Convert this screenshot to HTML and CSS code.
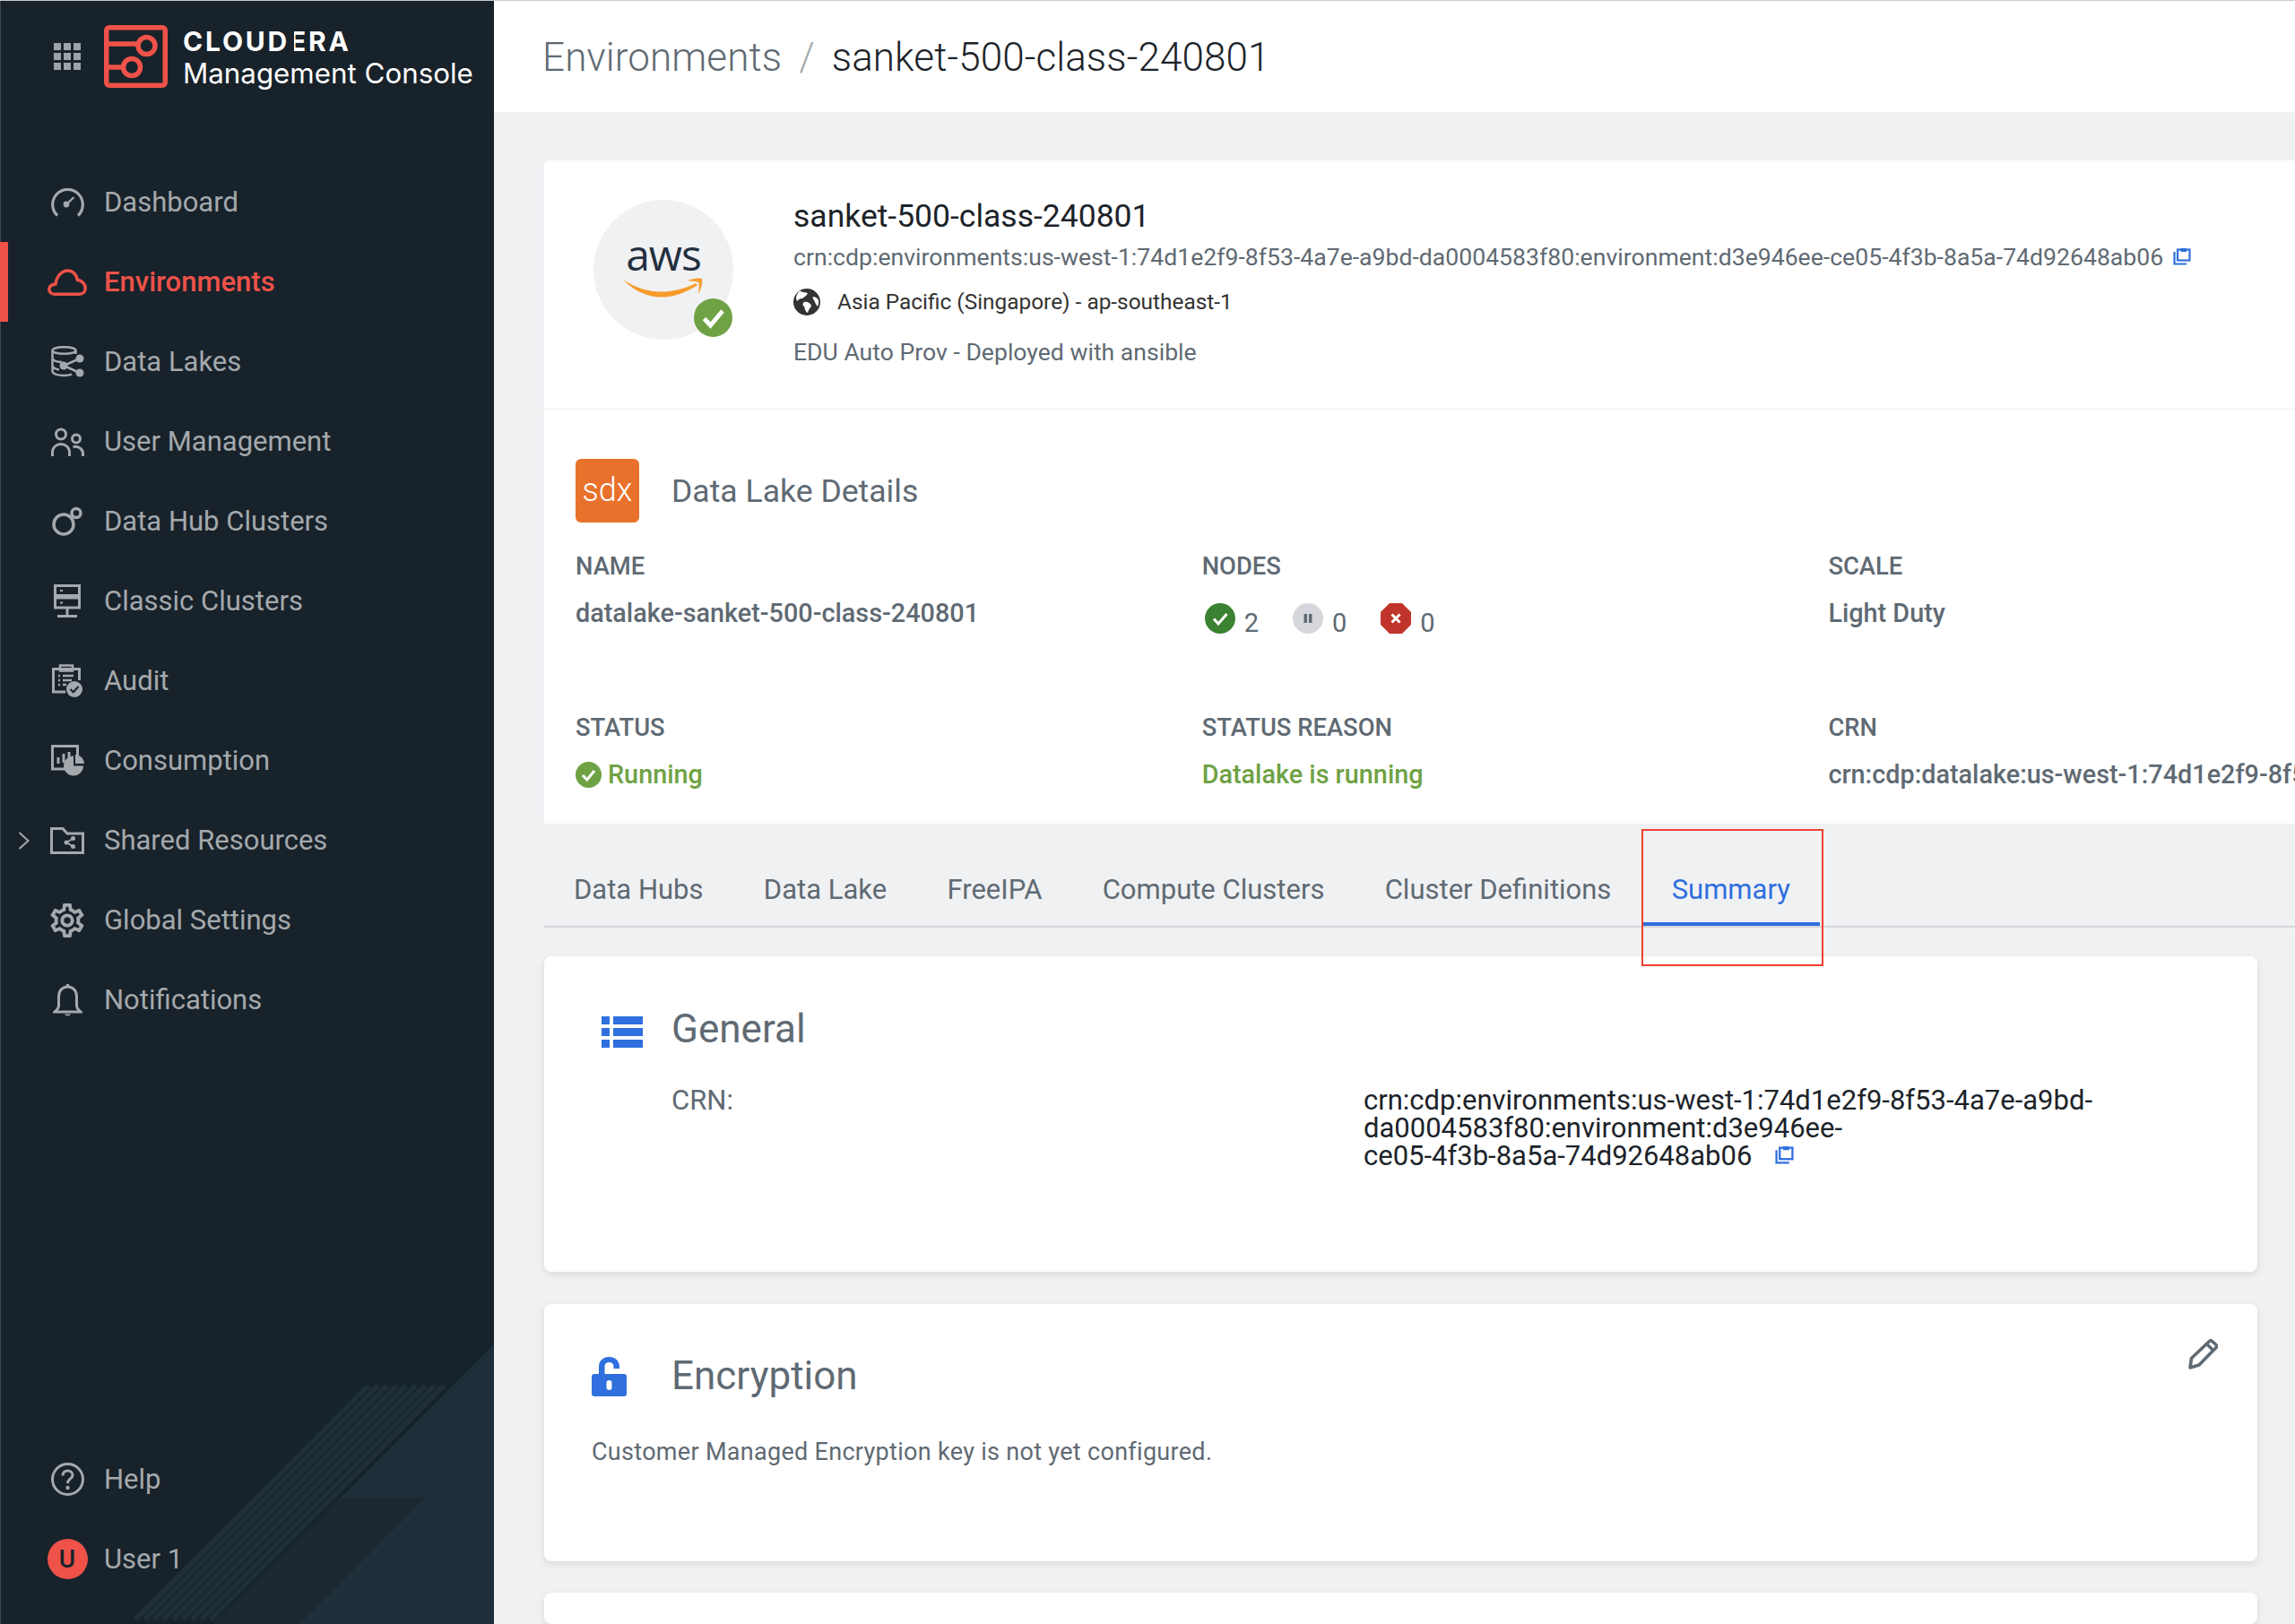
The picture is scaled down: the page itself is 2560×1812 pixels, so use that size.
FILE: index.html
```html
<!DOCTYPE html>
<html>
<head>
    <title>Environments - sanket-500-class-240801</title>
    <link rel="stylesheet" href="styles.css">
</head>
<body>
<div class="app">
    <aside class="sidebar">
        <svg class="sidebar-art" width="551" height="312" viewBox="0 1500 551 312">
            <polygon points="551,1500 380,1671 474,1671 334,1812 551,1812" fill="#1f2f3a"/>
            <polygon points="380,1671 474,1671 334,1812 238,1812" fill="#1b2830"/>
            <g stroke="#1f2f39" stroke-width="6">
                <line x1="411" y1="1546" x2="151" y2="1807"/>
                <line x1="421.5" y1="1546" x2="161.5" y2="1807"/>
                <line x1="432" y1="1546" x2="172" y2="1807"/>
                <line x1="442.5" y1="1546" x2="182.5" y2="1807"/>
                <line x1="453" y1="1546" x2="193" y2="1807"/>
                <line x1="463.5" y1="1546" x2="203.5" y2="1807"/>
                <line x1="474" y1="1546" x2="214" y2="1807"/>
                <line x1="484.5" y1="1546" x2="224.5" y2="1807"/>
                <line x1="495" y1="1546" x2="235" y2="1807"/>
            </g>
        </svg>

        <div class="brand">
            <svg class="brand-apps" width="30" height="30" viewBox="0 0 30 30" fill="#9ea3a8">
                <rect x="0" y="0" width="8" height="8"/><rect x="11" y="0" width="8" height="8"/><rect x="22" y="0" width="8" height="8"/>
                <rect x="0" y="11" width="8" height="8"/><rect x="11" y="11" width="8" height="8"/><rect x="22" y="11" width="8" height="8"/>
                <rect x="0" y="22" width="8" height="8"/><rect x="11" y="22" width="8" height="8"/><rect x="22" y="22" width="8" height="8"/>
            </svg>
            <svg class="brand-logo" width="71" height="70" viewBox="0 0 71 70" fill="none" stroke="#ee5249" stroke-width="5.5">
                <rect x="2.75" y="2.75" width="65.5" height="64.5" rx="3"/>
                <path d="M3 21H38M3 47H22"/>
                <circle cx="47.5" cy="23" r="9.5"/>
                <circle cx="31" cy="47" r="9.5"/>
            </svg>
            <div class="brand-text">
                <div class="brand-name">CLOUD<span class="brand-e">E</span>RA</div>
                <div class="brand-app">Management Console</div>
            </div>
        </div>

        <ul class="nav">
            <li class="nav-item">
                <svg class="nav-icon" width="37" height="32" viewBox="0 0 37 32" fill="none" stroke="#a4a9ad" stroke-width="3.200">
                    <path d="M7 30.500A16.800 16.800 0 1 1 30 30.500"/>
                    <path d="M17 18L25.500 10" stroke-width="2.400"/>
                    <circle cx="17" cy="18" r="3.400" fill="#a4a9ad" stroke="none"/>
                </svg>
                <span>Dashboard</span>
            </li>
            <li class="nav-item active">
                <svg class="nav-icon" width="44" height="30" viewBox="0 0 44 30" fill="none" stroke="#ee5249" stroke-width="3.500">
                    <path d="M8 28.200C3.500 28.200 1.800 25 1.800 23C1.800 19.500 4.500 17.500 9 17C10 8 16 2 22.500 2C28 2 32 6 33.500 12.500C38.500 13 42.200 17 42.200 21.500C42.200 25.500 39.500 28.200 35.500 28.200Z"/>
                </svg>
                <span>Environments</span>
            </li>
            <li class="nav-item">
                <svg class="nav-icon" width="37" height="35" viewBox="0 0 37 35" fill="none" stroke="#a4a9ad" stroke-width="2.500">
                    <ellipse cx="14.500" cy="5" rx="13" ry="3.800"/>
                    <path d="M1.500 5V28C1.500 31 7 33 14 33C18 33 21 32.500 23 31.500M27.500 5V9M1.500 14C3 17 8 18 12 18M1.500 23C3 25 6 26 9 26.500"/>
                    <path d="M32 14L14 22L32 30" stroke-width="2.500"/>
                    <circle cx="32" cy="14" r="4.500" fill="#a4a9ad" stroke="none"/>
                    <circle cx="14" cy="22" r="4.500" fill="#a4a9ad" stroke="none"/>
                    <circle cx="32" cy="30" r="4.500" fill="#a4a9ad" stroke="none"/>
                </svg>
                <span>Data Lakes</span>
            </li>
            <li class="nav-item">
                <svg class="nav-icon" width="37" height="32" viewBox="0 0 37 32" fill="none" stroke="#a4a9ad" stroke-width="3">
                    <circle cx="11" cy="7.500" r="5.500"/>
                    <circle cx="28" cy="12.500" r="4.500"/>
                    <path d="M1.500 32V28C1.500 22 6 18.500 11 18.500C16 18.500 20.500 22 20.500 28V32"/>
                    <path d="M24.500 21.500C30.500 20.500 35.500 24 35.500 29V32"/>
                </svg>
                <span>User Management</span>
            </li>
            <li class="nav-item">
                <svg class="nav-icon" width="34" height="33" viewBox="0 0 34 33" fill="none" stroke="#a4a9ad" stroke-width="3.500">
                    <circle cx="13" cy="20" r="11"/>
                    <circle cx="27" cy="7.500" r="5"/>
                </svg>
                <span>Data Hub Clusters</span>
            </li>
            <li class="nav-item">
                <svg class="nav-icon" width="30" height="37" viewBox="0 0 30 37" fill="none" stroke="#a4a9ad" stroke-width="3">
                    <rect x="1.500" y="1.500" width="27" height="11"/>
                    <rect x="1.500" y="15" width="27" height="11"/>
                    <path d="M15 26V35M4 35.500H26"/>
                    <path d="M7 7H10M7 20.500H10" stroke-width="2"/>
                </svg>
                <span>Classic Clusters</span>
            </li>
            <li class="nav-item">
                <svg class="nav-icon" width="34" height="37" viewBox="0 0 34 37" fill="none" stroke="#a4a9ad" stroke-width="3">
                    <path d="M15 31H1.500V5.500H30.500V18"/>
                    <rect x="9" y="1.500" width="14" height="6" stroke-width="2.500"/>
                    <path d="M7 13H9M12 13H24M7 18H9M12 18H22M7 23H9M12 23H16" stroke-width="2.500"/>
                    <circle cx="25" cy="28" r="9" fill="#a4a9ad" stroke="none"/>
                    <path d="M20.500 28L23.800 31.200L29.500 25" stroke="#18222a" stroke-width="2.200"/>
                </svg>
                <span>Audit</span>
            </li>
            <li class="nav-item">
                <svg class="nav-icon" width="37" height="35" viewBox="0 0 37 35" fill="none" stroke="#a4a9ad" stroke-width="3">
                    <path d="M15 27H1.500V1.500H29.500V14"/>
                    <path d="M8 14V21M14 10V20M20 8V14" stroke-width="3"/>
                    <path d="M25 12.500A11 11 0 1 0 36 23.500H25Z" fill="#a4a9ad" stroke="none"/>
                    <path d="M27 11A10 10 0 0 1 37 21H27Z" fill="#a4a9ad" stroke="none"/>
                </svg>
                <span>Consumption</span>
            </li>
            <li class="nav-item">
                <svg class="nav-caret" width="13" height="20" viewBox="0 0 13 20" fill="none" stroke="#a4a9ad" stroke-width="2">
                    <path d="M1.500 1L11.500 10L1.500 19"/>
                </svg>
                <svg class="nav-icon" width="38" height="30" viewBox="0 0 38 30" fill="none" stroke="#a4a9ad" stroke-width="3">
                    <path d="M1.500 28.500V1.500H14L19 7H36.500V28.500Z"/>
                    <path d="M25 13L18 17L25 21" stroke-width="2"/>
                    <circle cx="25.500" cy="12.500" r="2.500" fill="#a4a9ad" stroke="none"/>
                    <circle cx="18" cy="17" r="2.500" fill="#a4a9ad" stroke="none"/>
                    <circle cx="25.500" cy="21.500" r="2.500" fill="#a4a9ad" stroke="none"/>
                </svg>
                <span>Shared Resources</span>
            </li>
            <li class="nav-item">
                <svg class="nav-icon" width="38" height="38" viewBox="2 2 20 20" fill="#a4a9ad">
                    <path d="M19.430 12.980c.04-.32.07-.64.07-.98 0-.34-.03-.66-.07-.98l2.110-1.650c.19-.15.24-.42.12-.64l-2-3.460c-.09-.16-.26-.25-.44-.25-.06 0-.12.01-.17.03l-2.490 1c-.52-.4-1.080-.73-1.690-.98l-.38-2.650C14.460 2.180 14.250 2 14 2h-4c-.25 0-.46.18-.49.42l-.38 2.650c-.61.25-1.170.59-1.690.98l-2.490-1c-.06-.02-.12-.03-.18-.03-.17 0-.34.09-.43.25l-2 3.460c-.13.22-.07.49.12.64l2.110 1.650c-.04.32-.07.65-.07.98 0 .33.03.66.07.98l-2.110 1.650c-.19.15-.24.42-.12.64l2 3.460c.09.16.26.25.44.25.06 0 .12-.01.17-.03l2.490-1c.52.4 1.080.73 1.690.98l.38 2.650c.03.24.24.42.49.42h4c.25 0 .46-.18.49-.42l.38-2.650c.61-.25 1.170-.59 1.690-.98l2.490 1c.06.02.12.03.18.03.17 0 .34-.09.43-.25l2-3.460c.12-.22.07-.49-.12-.64l-2.110-1.650zm-1.980-1.710c.04.31.05.52.05.73 0 .21-.02.43-.05.73l-.14 1.130.89.7 1.080.84-.7 1.210-1.270-.51-1.040-.42-.9.68c-.43.32-.84.56-1.250.73l-1.060.43-.16 1.130-.2 1.350h-1.400l-.19-1.350-.16-1.130-1.060-.43c-.43-.18-.83-.41-1.230-.71l-.91-.7-1.060.43-1.270.51-.7-1.210 1.080-.84.89-.7-.14-1.130c-.03-.31-.05-.54-.05-.74s.02-.43.05-.73l.14-1.130-.89-.7-1.080-.84.7-1.210 1.270.51 1.040.42.9-.68c.43-.32.84-.56 1.250-.73l1.060-.43.16-1.130.2-1.350h1.390l.19 1.350.16 1.130 1.060.43c.43.18.83.41 1.230.71l.91.7 1.060-.43 1.270-.51.7 1.210-1.070.85-.89.7.14 1.130zM12 8c-2.210 0-4 1.790-4 4s1.790 4 4 4 4-1.790 4-4-1.790-4-4-4zm0 6c-1.100 0-2-.9-2-2s.9-2 2-2 2 .9 2 2-.9 2-2 2z"/>
                </svg>
                <span>Global Settings</span>
            </li>
            <li class="nav-item">
                <svg class="nav-icon" width="33" height="37" viewBox="0 0 33 37" fill="none" stroke="#a4a9ad" stroke-width="3">
                    <path d="M16.500 4C10 4 6.500 9 6.500 15V25C6.500 28 4.500 30 2 32H31C28.500 30 26.500 28 26.500 25V15C26.500 9 23 4 16.500 4Z"/>
                    <path d="M16.500 1V4"/>
                    <path d="M13 34.500C14 37 19 37 20 34.500Z" fill="#a4a9ad" stroke="none"/>
                </svg>
                <span>Notifications</span>
            </li>
        </ul>

        <ul class="nav nav-bottom">
            <li class="nav-item">
                <svg class="nav-icon" width="37" height="37" viewBox="0 0 37 37" fill="none" stroke="#a4a9ad" stroke-width="3">
                    <circle cx="18.500" cy="18.500" r="17"/>
                    <path d="M13 14.500C13 11 15.500 9 18.500 9C21.500 9 24 11 24 14C24 18 18.500 18 18.500 23"/>
                    <circle cx="18.500" cy="28" r="2.200" fill="#a4a9ad" stroke="none"/>
                </svg>
                <span>Help</span>
            </li>
            <li class="nav-item">
                <span class="nav-icon avatar">U</span>
                <span>User 1</span>
            </li>
        </ul>
    </aside>

    <div class="page">
        <header class="topbar">
            <span class="crumb">Environments</span>
            <span class="crumb-sep">/</span>
            <span class="crumb-current">sanket-500-class-240801</span>
        </header>

        <main class="content">
            <section class="env-card">
                <div class="env-head">
                    <div class="cloud-logo">
                        <span class="aws-text">aws</span>
                        <svg class="aws-smile" width="90" height="22" viewBox="0 0 90 22" fill="#f79c2c">
                            <path d="M0 2C14 11 28 15.500 43 15.500C56 15.500 69 12 81 6L83 8C71 16 57 21.500 43 21.500C27 21.500 11 14 0 2Z"/>
                            <path d="M72 3C77 1 84 0 88 1C89 5 87 13 84 18C84.500 13 85 8 84.500 5C81 4 76 3.500 72 3Z"/>
                        </svg>
                        <svg class="status-badge" width="43" height="43" viewBox="0 0 43 43">
                            <circle cx="21.500" cy="21.500" r="21.500" fill="#6fa245"/>
                            <path d="M11.500 22.500L18.500 30L32 14" fill="none" stroke="#fff" stroke-width="5"/>
                        </svg>
                    </div>
                    <div class="env-info">
                        <div class="env-title">sanket-500-class-240801</div>
                        <div class="env-crn">
                            <span>crn:cdp:environments:us-west-1:74d1e2f9-8f53-4a7e-a9bd-da0004583f80:environment:d3e946ee-ce05-4f3b-8a5a-74d92648ab06</span>
                            <svg class="copy-icon" width="20" height="20" viewBox="0 0 20 20" fill="none" stroke="#2f6fde" stroke-width="2.200">
                                <path d="M1.500 5V18.500H15"/>
                                <rect x="5" y="2.500" width="13.500" height="12"/>
                                <path d="M8.500 1H15V5H8.500Z" fill="#2f6fde" stroke="none"/>
                            </svg>
                        </div>
                        <div class="env-region">
                            <svg class="globe" width="30" height="30" viewBox="0 0 30 30">
                                <circle cx="15" cy="15" r="15" fill="#333"/>
                                <path d="M7 2.500C10 4 13 4 16 5C15 8 12 9 10 11C7 11 5 12.500 4.500 14C2.500 12 2 8 7 2.500Z" fill="#fff"/>
                                <path d="M12 15C15 14 19 16 20 19C19 22 17 23 16 27C13 26 13 22 12 20C10 19 10 16 12 15Z" fill="#fff"/>
                                <path d="M22 9C24 9 26.500 10 28 13C28.500 16 28 18 27 20C25 18 24 15 23 13C22 12 21 10 22 9Z" fill="#fff"/>
                            </svg>
                            <span>Asia Pacific (Singapore) - ap-southeast-1</span>
                        </div>
                        <div class="env-desc">EDU Auto Prov - Deployed with ansible</div>
                    </div>
                </div>

                <div class="lake">
                    <div class="lake-head">
                        <span class="sdx">sdx</span>
                        <span class="lake-title">Data Lake Details</span>
                    </div>
                    <div class="lake-grid">
                        <div class="field">
                            <div class="field-label">NAME</div>
                            <div class="field-value">datalake-sanket-500-class-240801</div>
                        </div>
                        <div class="field">
                            <div class="field-label">NODES</div>
                            <div class="nodes">
                                <span class="node">
                                    <svg width="34" height="34" viewBox="0 0 34 34">
                                        <circle cx="17" cy="17" r="17" fill="#3b8132"/>
                                        <path d="M10 17.500L15 23L24.500 12" fill="none" stroke="#fff" stroke-width="3"/>
                                    </svg>
                                    2
                                </span>
                                <span class="node">
                                    <svg width="34" height="34" viewBox="0 0 34 34">
                                        <circle cx="17" cy="17" r="17" fill="#d5d7dc"/>
                                        <path d="M12.500 12H16V22H12.500ZM18 12H21.500V22H18Z" fill="#5f6a73"/>
                                    </svg>
                                    0
                                </span>
                                <span class="node">
                                    <svg width="34" height="34" viewBox="0 0 34 34">
                                        <polygon points="10,0 24,0 34,10 34,24 24,34 10,34 0,24 0,10" fill="#c0352b"/>
                                        <path d="M12.500 12.500L21.500 21.500M21.500 12.500L12.500 21.500" stroke="#fff" stroke-width="3"/>
                                    </svg>
                                    0
                                </span>
                            </div>
                        </div>
                        <div class="field">
                            <div class="field-label">SCALE</div>
                            <div class="field-value">Light Duty</div>
                        </div>
                        <div class="field">
                            <div class="field-label">STATUS</div>
                            <div class="field-value good">
                                <svg class="status-ok" width="29" height="29" viewBox="0 0 29 29">
                                    <circle cx="14.500" cy="14.500" r="14.500" fill="#6fa245"/>
                                    <path d="M8 15L12.800 20L21 10" fill="none" stroke="#fff" stroke-width="3"/>
                                </svg>
                                Running
                            </div>
                        </div>
                        <div class="field">
                            <div class="field-label">STATUS REASON</div>
                            <div class="field-value good">Datalake is running</div>
                        </div>
                        <div class="field">
                            <div class="field-label">CRN</div>
                            <div class="field-value">crn:cdp:datalake:us-west-1:74d1e2f9-8f53-4a7e-a9bd-da0004583f80</div>
                        </div>
                    </div>
                </div>
            </section>

            <nav class="tabs">
                <a class="tab">Data Hubs</a>
                <a class="tab">Data Lake</a>
                <a class="tab">FreeIPA</a>
                <a class="tab">Compute Clusters</a>
                <a class="tab">Cluster Definitions</a>
                <a class="tab selected">Summary</a>
                <span class="tab-highlight"></span>
            </nav>

            <section class="card card-general">
                <div class="card-head">
                    <svg class="list-icon" width="46" height="35" viewBox="0 0 46 35" fill="#2f6fde">
                        <rect x="0" y="0" width="9" height="9"/><rect x="13" y="0" width="33" height="9"/>
                        <rect x="0" y="13" width="9" height="9"/><rect x="13" y="13" width="33" height="9"/>
                        <rect x="0" y="26" width="9" height="9"/><rect x="13" y="26" width="33" height="9"/>
                    </svg>
                    <h2 class="card-title">General</h2>
                </div>
                <div class="info-row">
                    <div class="info-label">CRN:</div>
                    <div class="info-value">crn:cdp:environments:us-west-1:74d1e2f9-8f53-4a7e-a9bd-<br>da0004583f80:environment:d3e946ee-<br>ce05-4f3b-8a5a-74d92648ab06
                        <svg class="copy-icon" width="21" height="21" viewBox="0 0 20 20" fill="none" stroke="#2f6fde" stroke-width="2.200">
                            <path d="M1.500 5V18.500H15"/>
                            <rect x="5" y="2.500" width="13.500" height="12"/>
                            <path d="M8.500 1H15V5H8.500Z" fill="#2f6fde" stroke="none"/>
                        </svg>
                    </div>
                </div>
            </section>

            <section class="card card-encryption">
                <div class="card-head">
                    <svg class="lock-icon" width="39" height="45" viewBox="0 0 39 45">
                        <path d="M8 22V12C8 5 13 1 19.500 1C26 1 31 5 31 12V14H24.500V12C24.500 8.500 22.500 7 19.500 7C16.500 7 14.500 8.500 14.500 12V22Z" fill="#2f6fde"/>
                        <path d="M3 20H36C38 20 39 21 39 23V42C39 44 38 45 36 45H3C1 45 0 44 0 42V23C0 21 1 20 3 20Z" fill="#2f6fde"/>
                        <rect x="16.500" y="27" width="6" height="11" rx="3" fill="#fff"/>
                    </svg>
                    <h2 class="card-title">Encryption</h2>
                </div>
                <p class="card-text">Customer Managed Encryption key is not yet configured.</p>
                <svg class="edit-icon" width="33" height="34" viewBox="0 0 33 34" fill="none" stroke="#5f6a73" stroke-width="3.600" stroke-linejoin="round">
                    <path d="M3.500 21.500L23.500 2.500C24.500 1.500 25.500 1.500 26.500 2.500L31 6.500C32 7.500 32 8.500 31 9.500L12 29L2 32Z"/>
                    <path d="M20.500 5.500L28 13" />
                </svg>
            </section>

            <section class="card card-next"></section>
        </main>
    </div>
</div>
</body>
</html>
```

FILE: styles.css
```css
* {
    box-sizing: border-box;
}

html, body {
    height: 100%;
    margin: 0;
    overflow: hidden;
}

body {
    font-family: Roboto, "Liberation Sans", sans-serif;
    background-color: #f0f1f3;
    border-top: 1px solid #c9cbcd;
}

.app {
    display: flex;
    height: 1811px;
    width: 2560px;
    overflow: hidden;
}

/* sidebar */
.sidebar {
    position: relative;
    flex: 0 0 551px;
    display: flex;
    flex-direction: column;
    background-color: #18222a;
    box-shadow: inset 1px 0 0 #3d474e;
    overflow: hidden;
}

.sidebar-art {
    position: absolute;
    left: 0;
    bottom: 0;
}

.brand {
    display: flex;
    height: 180px;
    padding: 27px 0 0 60px;
}

.brand-apps {
    margin: 20px 26px 0 0;
}

.brand-logo {
    margin-right: 17px;
}

.brand-text {
    color: #fff;
    font-family: Inter, sans-serif;
}

.brand-name {
    font-size: 30px;
    line-height: 36px;
    font-weight: 700;
    letter-spacing: 2.8px;
}

.brand-e {
    position: relative;
}

.brand-e::before {
    content: "";
    position: absolute;
    left: 0;
    top: 6px;
    width: 5px;
    height: 24px;
    background-color: #18222a;
}

.brand-app {
    font-size: 31.3px;
    line-height: 36px;
}

.nav {
    position: relative;
    list-style: none;
    margin: 0;
    padding: 0;
}

.nav-bottom {
    margin-top: auto;
    padding-bottom: 28px;
}

.nav-item {
    display: grid;
    grid-template-columns: 53px 44px 1fr;
    align-items: center;
    height: 89px;
    font-size: 31px;
    color: #a4a9ad;
}

.nav-item span:not(.nav-icon) {
    grid-column: 3;
    margin-left: 19px;
}

.nav-item.active {
    color: #ee5249;
    font-weight: 500;
    box-shadow: inset 9px 0 0 #ee5249;
}

.nav-icon {
    grid-column: 2;
    justify-self: center;
}

.nav-caret {
    grid-column: 1;
    justify-self: center;
}

.avatar {
    width: 45px;
    height: 45px;
    border-radius: 50%;
    background-color: #ee5249;
    color: #18222a;
    font-size: 28px;
    font-weight: 500;
    line-height: 45px;
    text-align: center;
}

/* page */
.page {
    flex: 1;
    min-width: 0;
    display: flex;
    flex-direction: column;
    overflow: hidden;
}

.topbar {
    flex: 0 0 124px;
    display: flex;
    align-items: center;
    padding: 2px 0 0 54px;
    background-color: #fff;
    font-size: 44px;
    font-weight: 300;
    letter-spacing: 0.1px;
    white-space: nowrap;
}

.crumb {
    color: #5f6a73;
}

.crumb-sep {
    margin: 0 19px;
    color: #a4a9ad;
}

.crumb-current {
    color: #1c2329;
}

.content {
    flex: 1;
    min-height: 0;
    overflow: hidden;
    padding: 54px 42px 0 56px;
}

.env-card {
    width: 1960px;
    height: 740px;
    background-color: #fff;
    border-radius: 6px 0 0 0;
    overflow: hidden;
}

.env-head {
    display: flex;
    height: 278px;
    padding: 40px 0 0 55px;
    border-bottom: 1px solid #eceef0;
}

.cloud-logo {
    position: relative;
    flex: 0 0 156px;
    height: 156px;
    margin-top: 4px;
    border-radius: 50%;
    background-color: #f0f1f3;
    text-align: center;
}

.aws-text {
    display: block;
    padding-top: 36px;
    font-family: "Open Sans", sans-serif;
    font-size: 48px;
    font-weight: 500;
    line-height: 50px;
    letter-spacing: -1px;
    color: #232f3e;
}

.aws-smile {
    position: absolute;
    left: 33px;
    top: 87px;
}

.status-badge {
    position: absolute;
    left: 112px;
    top: 110px;
}

.env-info {
    margin-left: 67px;
    white-space: nowrap;
}

.env-title {
    font-size: 35.5px;
    line-height: 44px;
    color: #1c2329;
}

.env-crn {
    display: flex;
    align-items: center;
    gap: 11px;
    font-size: 26.62px;
    line-height: 48px;
    color: #5f6a73;
}

.env-crn .copy-icon {
    margin-bottom: 3px;
}

.env-region {
    display: flex;
    align-items: center;
    gap: 19px;
    font-size: 24.4px;
    line-height: 52px;
    color: #333;
}

.env-desc {
    font-size: 26.6px;
    line-height: 60px;
    color: #5f6a73;
}

.lake {
    padding: 55px 0 0 35px;
}

.lake-head {
    display: flex;
    align-items: center;
    gap: 36px;
    height: 71px;
}

.sdx {
    width: 71px;
    height: 71px;
    border-radius: 6px;
    background-color: #e8722c;
    color: #fff;
    font-size: 36px;
    font-weight: 300;
    line-height: 71px;
    text-align: center;
}

.lake-title {
    font-size: 35.6px;
    color: #5f6a73;
}

.lake-grid {
    display: grid;
    grid-template-columns: repeat(3, 698.7px);
    grid-auto-rows: 180px;
    margin-top: 31px;
}

.field-label {
    font-size: 27.4px;
    font-weight: 500;
    line-height: 36px;
    margin-bottom: 16px;
    color: #5f6a73;
}

.field-value {
    display: flex;
    align-items: center;
    gap: 7px;
    font-size: 28.8px;
    font-weight: 500;
    line-height: 36px;
    color: #5f6a73;
    white-space: nowrap;
}

.field-value.good {
    color: #6fa245;
}

.nodes {
    display: flex;
    gap: 38px;
    margin: 23px 0 0 3px;
    font-size: 29px;
    color: #5f6a73;
}

.node {
    display: flex;
    align-items: flex-start;
    gap: 10px;
    line-height: 44px;
}

.tabs {
    position: relative;
    display: flex;
    width: 1960px;
    height: 116px;
    border-bottom: 2px solid #d4d6d9;
}

.tab {
    height: 114px;
    padding: 51px 33px 0 33px;
    margin-right: 1.3px;
    font-size: 31px;
    line-height: 46px;
    color: #5f6a73;
}

.tab.selected {
    color: #2f6fde;
    border-bottom: 4px solid #2f6fde;
}

.tab-highlight {
    position: absolute;
    z-index: 1;
    left: 1224px;
    top: 6px;
    width: 203px;
    height: 153px;
    border: 2px solid #ef4130;
}

.card {
    position: relative;
    background-color: #fff;
    border-radius: 8px;
    box-shadow: 0 3px 8px rgba(0, 0, 0, 0.1);
}

.card-general {
    height: 352px;
    margin-top: 32px;
    padding-top: 51px;
}

.card-encryption {
    height: 287px;
    margin-top: 36px;
    padding-top: 50px;
}

.card-next {
    height: 35px;
    margin-top: 35px;
}

.card-head {
    display: flex;
    align-items: center;
    height: 60px;
    padding-left: 53px;
}

.card-title {
    margin: 0;
    font-size: 44px;
    font-weight: 400;
    color: #5f6a73;
}

.list-icon {
    margin: 6px 32px 0 11px;
}

.lock-icon {
    margin-right: 50px;
}

.info-row {
    display: flex;
    margin-top: 34px;
    padding-left: 142px;
    font-size: 31px;
    line-height: 31px;
}

.info-label {
    flex: 0 0 772px;
    color: #5f6a73;
}

.info-value {
    color: #1c2329;
    white-space: nowrap;
}

.info-value .copy-icon {
    margin-left: 18px;
    vertical-align: 1px;
}

.card-text {
    margin: 37px 0 0 53px;
    font-size: 27px;
    line-height: 36px;
    letter-spacing: 0.3px;
    color: #5f6a73;
}

.edit-icon {
    position: absolute;
    top: 39px;
    right: 44px;
}
```
